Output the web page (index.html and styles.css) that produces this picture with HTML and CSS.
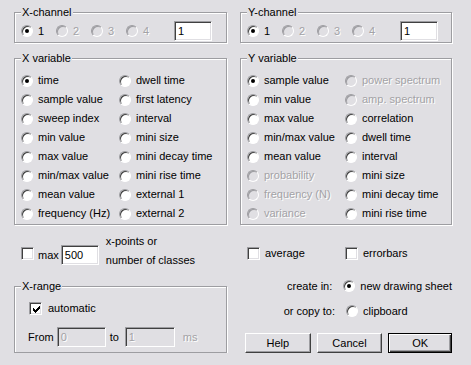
FILE: index.html
```html
<!DOCTYPE html>
<html lang="en">
<head>
    <meta charset="UTF-8">
    <title>Graph settings</title>
    <link rel="stylesheet" href="styles.css">
</head>
<body>

<div class="dialog">
    <!-- left column: X axis -->
    <div class="col col-left">
        <fieldset class="group channel">
            <legend>X-channel</legend>
            <div class="channel-row">
                <span class="opt ch"><span class="radio on"></span>1</span>
                <span class="opt ch off"><span class="radio"></span>2</span>
                <span class="opt ch off"><span class="radio"></span>3</span>
                <span class="opt ch off"><span class="radio"></span>4</span>
                <span class="edit ch-edit">1</span>
            </div>
        </fieldset>

        <fieldset class="group vars">
            <legend>X variable</legend>
            <div class="var-grid">
                <span class="opt"><span class="radio on"></span>time</span>
                <span class="opt"><span class="radio"></span>dwell time</span>
                <span class="opt"><span class="radio"></span>sample value</span>
                <span class="opt"><span class="radio"></span>first latency</span>
                <span class="opt"><span class="radio"></span>sweep index</span>
                <span class="opt"><span class="radio"></span>interval</span>
                <span class="opt"><span class="radio"></span>min value</span>
                <span class="opt"><span class="radio"></span>mini size</span>
                <span class="opt"><span class="radio"></span>max value</span>
                <span class="opt"><span class="radio"></span>mini decay time</span>
                <span class="opt"><span class="radio"></span>min/max value</span>
                <span class="opt"><span class="radio"></span>mini rise time</span>
                <span class="opt"><span class="radio"></span>mean value</span>
                <span class="opt"><span class="radio"></span>external 1</span>
                <span class="opt"><span class="radio"></span>frequency (Hz)</span>
                <span class="opt"><span class="radio"></span>external 2</span>
            </div>
        </fieldset>

        <div class="max-row">
            <span class="check"></span>
            <span class="max-label">max</span>
            <span class="edit max-edit">500</span>
            <span class="max-text">x-points or<br>number of classes</span>
        </div>

        <fieldset class="group range">
            <legend>X-range</legend>
            <div class="auto-row">
                <span class="check checked">
                    <svg width="7" height="7" viewBox="0 0 7 7"><path d="M0 2h1v3h-1z M1 3h1v3h-1z M2 4h1v3h-1z M3 3h1v3h-1z M4 2h1v3h-1z M5 1h1v3h-1z M6 0h1v3h-1z" fill="#000"/></svg>
                </span>
                <span class="auto-label">automatic</span>
            </div>
            <div class="from-row">
                <span>From</span>
                <span class="edit disabled from-edit">0</span>
                <span class="to-label">to</span>
                <span class="edit disabled to-edit">1</span>
                <span class="off unit">ms</span>
            </div>
        </fieldset>
    </div>

    <!-- right column: Y axis -->
    <div class="col col-right">
        <fieldset class="group channel">
            <legend>Y-channel</legend>
            <div class="channel-row">
                <span class="opt ch"><span class="radio on"></span>1</span>
                <span class="opt ch off"><span class="radio"></span>2</span>
                <span class="opt ch off"><span class="radio"></span>3</span>
                <span class="opt ch off"><span class="radio"></span>4</span>
                <span class="edit ch-edit">1</span>
            </div>
        </fieldset>

        <fieldset class="group vars">
            <legend>Y variable</legend>
            <div class="var-grid">
                <span class="opt"><span class="radio on"></span>sample value</span>
                <span class="opt off"><span class="radio"></span>power spectrum</span>
                <span class="opt"><span class="radio"></span>min value</span>
                <span class="opt off"><span class="radio"></span>amp. spectrum</span>
                <span class="opt"><span class="radio"></span>max value</span>
                <span class="opt"><span class="radio"></span>correlation</span>
                <span class="opt"><span class="radio"></span>min/max value</span>
                <span class="opt"><span class="radio"></span>dwell time</span>
                <span class="opt"><span class="radio"></span>mean value</span>
                <span class="opt"><span class="radio"></span>interval</span>
                <span class="opt off"><span class="radio"></span>probability</span>
                <span class="opt"><span class="radio"></span>mini size</span>
                <span class="opt off"><span class="radio"></span>frequency (N)</span>
                <span class="opt"><span class="radio"></span>mini decay time</span>
                <span class="opt off"><span class="radio"></span>variance</span>
                <span class="opt"><span class="radio"></span>mini rise time</span>
            </div>
        </fieldset>

        <div class="flag-row">
            <span class="opt"><span class="check"></span>average</span>
            <span class="opt"><span class="check"></span>errorbars</span>
        </div>

        <div class="send-row first">
            <span class="send-label">create in:</span>
            <span class="opt"><span class="radio on"></span>new drawing sheet</span>
        </div>
        <div class="send-row">
            <span class="send-label">or copy to:</span>
            <span class="opt"><span class="radio"></span>clipboard</span>
        </div>

        <div class="buttons">
            <span class="btn btn-help">Help</span>
            <span class="btn btn-cancel">Cancel</span>
            <span class="btn btn-ok default">OK</span>
        </div>
    </div>
</div>

</body>
</html>
```

FILE: styles.css
```css
body {
    margin: 0;
    background-color: #e0dfe3;
    font-family: "Liberation Sans", Arial, sans-serif;
    font-size: 11px;
    line-height: 13px;
    color: #000;
}

.dialog {
    display: flex;
    gap: 13px;
    padding: 6px 0 0 14px;
}
.col {
    display: flex;
    flex-direction: column;
}
.col-left {
    width: 213px;
}
.col-right {
    width: 212px;
}

/* etched group box */
.group {
    margin: 0;
    min-width: 0;
    padding: 0 6px 1px 6px;
    border: 1px solid #9d9da1;
    box-shadow: inset 1px 1px #fff, 1px 1px #fff;
}
.group legend {
    padding: 0 1px;
    line-height: 13px;
    background-color: #e0dfe3;
}
.channel {
    padding-top: 2px;
}
.vars {
    margin-top: 9px;
    padding-top: 6px;
}

.opt {
    display: flex;
    align-items: center;
    white-space: nowrap;
}
.off {
    color: #a3a2a6;
    text-shadow: 1px 1px #fff;
}

/* classic controls */
.radio {
    position: relative;
    flex: none;
    box-sizing: border-box;
    width: 12px;
    height: 12px;
    margin-right: 5px;
    border-radius: 50%;
    border: 1px solid;
    border-color: #9d9da1 #fff #fff #9d9da1;
    background-color: #fff;
    box-shadow: inset 1px 1px #404040;
}
.off .radio {
    background-color: #e0dfe3;
    box-shadow: inset 1px 1px #9d9da1;
}
.radio.on::after {
    content: "";
    position: absolute;
    left: 3px;
    top: 3px;
    width: 4px;
    height: 4px;
    border-radius: 50%;
    background-color: #000;
}
.check {
    display: flex;
    align-items: center;
    justify-content: center;
    flex: none;
    box-sizing: border-box;
    width: 13px;
    height: 13px;
    border: 1px solid;
    border-color: #9d9da1 #fff #fff #9d9da1;
    background-color: #fff;
    box-shadow: inset 1px 1px #404040, inset -1px -1px #e0dfe3;
}
.check svg {
    display: block;
    margin: 1px 0 0 1px;
}
.edit {
    display: block;
    flex: none;
    box-sizing: border-box;
    height: 20px;
    padding: 0 3px;
    line-height: 18px;
    border: 1px solid;
    border-color: #9d9da1 #fff #fff #9d9da1;
    background-color: #fff;
    box-shadow: inset 1px 1px #404040, inset -1px -1px #e0dfe3;
}
.edit.disabled {
    background-color: #e0dfe3;
    color: #a3a2a6;
    text-shadow: 1px 1px #fff;
}

/* channel row */
.channel-row {
    display: flex;
    align-items: center;
    height: 20px;
}
.ch {
    width: 35px;
}
.ch-edit {
    width: 38px;
    margin-left: 13px;
}

/* variables grid */
.var-grid {
    display: grid;
    grid-template-columns: 98px 1fr;
    grid-auto-rows: 19px;
}

/* max row */
.max-row {
    display: flex;
    align-items: flex-start;
    margin-top: 7px;
    padding-left: 7px;
}
.max-row .check {
    margin-top: 15px;
}
.max-label {
    margin: 13px 2px 0 4px;
    line-height: 20px;
}
.max-edit {
    width: 38px;
    margin-top: 13px;
}
.max-text {
    margin-left: 7px;
    line-height: 19px;
}

/* x-range */
.range {
    margin-top: 10px;
    padding-top: 9px;
    padding-bottom: 5px;
}
.auto-row {
    display: flex;
    align-items: center;
    height: 13px;
    padding-left: 8px;
}
.auto-label {
    margin-left: 6px;
}
.from-row {
    display: flex;
    align-items: center;
    height: 20px;
    margin-top: 12px;
    padding-left: 7px;
}
.from-edit {
    width: 49px;
    margin-left: 3px;
}
.to-label {
    margin: 0 6px 0 4px;
}
.to-edit {
    width: 50px;
}
.unit {
    margin-left: 8px;
}

/* right bottom */
.flag-row {
    display: grid;
    grid-template-columns: 98px 1fr;
    height: 13px;
    margin-top: 22px;
    padding-left: 7px;
}
.flag-row .check {
    margin-right: 5px;
}
.send-row {
    display: flex;
    align-items: center;
    height: 20px;
    margin-top: 5px;
}
.send-row.first {
    margin-top: 16px;
}
.send-label {
    width: 95px;
    margin-right: 11px;
    text-align: right;
}

.buttons {
    display: flex;
    gap: 6px;
    margin-top: 12px;
    padding-left: 5px;
}
.btn {
    box-sizing: border-box;
    width: 66px;
    height: 20px;
    line-height: 18px;
    text-align: center;
    border: 1px solid;
    border-color: #fff #404040 #404040 #fff;
    box-shadow: inset -1px -1px #9d9da1;
    background-color: #e0dfe3;
}
.btn-ok {
    width: 64px;
}
.btn.default {
    border-color: #000;
    box-shadow: inset 1px 1px #fff, inset -1px -1px #404040, inset -2px -2px #9d9da1;
}
```
